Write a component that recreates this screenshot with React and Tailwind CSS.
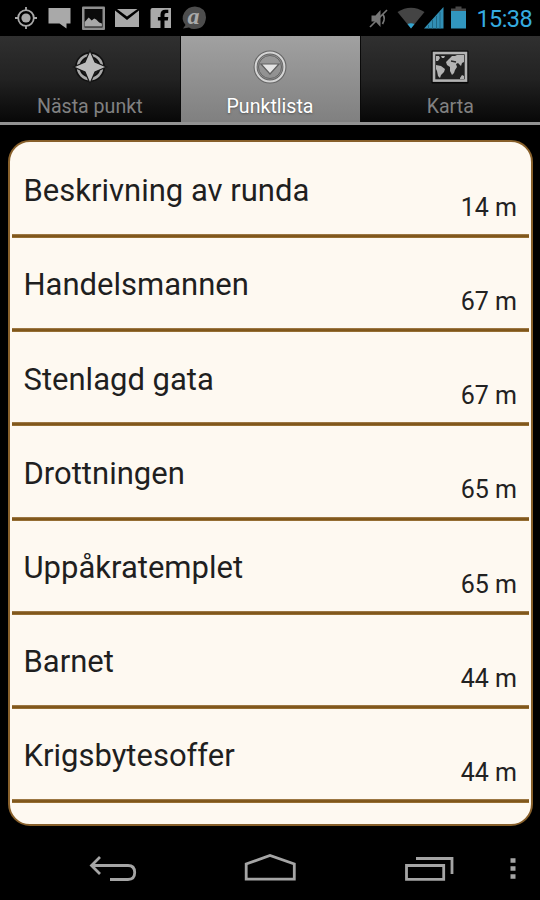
import React from "react";

const points = [
  { name: "Beskrivning av runda", distance: "14 m" },
  { name: "Handelsmannen", distance: "67 m" },
  { name: "Stenlagd gata", distance: "67 m" },
  { name: "Drottningen", distance: "65 m" },
  { name: "Uppåkratemplet", distance: "65 m" },
  { name: "Barnet", distance: "44 m" },
  { name: "Krigsbytesoffer", distance: "44 m" },
];

function StatusBar() {
  return (
    <header className="flex h-9 shrink-0 items-center justify-between bg-black pr-2">
      <svg width="220" height="36" viewBox="0 0 220 36" fill="#a9a9a9">
        <g stroke="#a9a9a9" strokeWidth="1.8">
          <circle cx="26" cy="18" r="7.800" fill="none" />
          <path d="M26 7v4M26 25v4M15 18h4M33 18h4" />
        </g>
        <circle cx="26" cy="18" r="4.6" />
        <path d="M48.500 8H70.500V23.500H66.500V28.500L59.500 23.500H48.500z" />
        <rect x="82" y="6.500" width="23" height="23.500" rx="1" fill="#8f8f8f" />
        <rect x="84.500" y="9" width="18" height="18.500" fill="#0b0b0b" />
        <path d="M84.700 26.500V22l4-4.500 3 3 2.500-2 2 1 3 3 2.700 1v3z" />
        <path d="M115 10.500L127 20l12-9.500V27H115z" />
        <path d="M117 9h20.500L127 16.500z" />
        <path d="M152.500 8H171V28H164.500V20.500h3.300l.5-3.500h-3.800v-2.300q0-1.700 1.800-1.700h2V9.800h-3q-4.800 0-4.800 4.800V17h-2.600v3.500h2.600V28H150.500V10q0-2 2-2z" />
        <path d="M183 28.500l2.500-3.500q-5-6-1.300-12.300Q188 6.500 195 6.500q11 1 11 11Q205 29 194 29q-3 0-5-1.500z" fill="#4d4d4d" />
        <text x="187.500" y="23.500" fontFamily="Liberation Serif, serif" fontWeight="bold" fontStyle="italic" fontSize="24" fill="#aaa">a</text>
      </svg>
      <div className="flex items-center">
        <svg width="106" height="36" viewBox="366 0 106 36">
          <path d="M371.500 15.500h4l5-5.500v17l-5-5.500h-4z" fill="#777" />
          <path d="M382.500 14q3.500 4 0 10M370 27L387 10" fill="none" stroke="#777" strokeWidth="1.700" />
          <path d="M397.500 12Q411 3.500 424.500 12L411 28.500z" fill="#444" />
          <path d="M407.500 24q3.500-1.500 7 0L411 28.500z" fill="#34a4cf" />
          <path d="M424 28.500L443.500 7v21.500z" fill="#318fb5" />
          <path d="M428.500 25v3.500M432.500 20v8.500M436.500 16v12.500M440 12v16.500" stroke="#206985" strokeWidth="1" />
          <path d="M451 11v-2.500h4.500V6.500h6V8.500h4.500V11z" fill="#484848" />
          <rect x="451" y="11" width="15" height="17.500" fill="#3196bf" />
        </svg>
        <span className="w-[60px] whitespace-nowrap pt-[2px] text-right text-[23.500px] leading-9 tracking-[-0.6px] text-[#35ace0]">15:38</span>
      </div>
    </header>
  );
}

function CompassIcon() {
  return (
    <svg width="36" height="36" viewBox="0 0 36 36">
      <circle cx="18" cy="18" r="12" fill="none" stroke="#101010" strokeWidth="6" />
      <circle cx="18" cy="18" r="12" fill="none" stroke="#a8a8a8" strokeWidth="2.600" />
      <path d="M18 1.500l5 11.500L34.500 18 23 23 18 34.500 13 23 1.500 18 13 13z" fill="#bcbcbc" stroke="#171717" strokeWidth="1.200" />
    </svg>
  );
}

function DropIcon() {
  return (
    <svg width="36" height="36" viewBox="0 0 36 36">
      <circle cx="18" cy="18" r="14.500" fill="none" stroke="#666" strokeWidth="4" />
      <circle cx="18" cy="18" r="14.400" fill="none" stroke="#d5d5d5" strokeWidth="2" />
      <circle cx="18" cy="18" r="11.500" fill="none" stroke="#656565" strokeWidth="1" />
      <path d="M9 15h18L18 25z" fill="#e5e5e5" stroke="#606060" strokeWidth="1.200" />
    </svg>
  );
}

function WorldIcon() {
  return (
    <svg width="38" height="36" viewBox="0 0 38 36">
      <rect x="0.500" y="1.500" width="37" height="33" rx="1" fill="#080808" />
      <rect x="3" y="4" width="32" height="27.600" fill="#202020" stroke="#b3b3b3" strokeWidth="2.600" />
      <g fill="#b3b3b3">
        <path d="M5 7h3l1 2-2 3H5zM10 7h4l-1 2h-2zM5 16l5 1 4 3-1 3-3 3-1 3-2-2-1-5-1-2z" />
        <path d="M18 10l3-3h3l2-1h7v7l-2 1-1 3-3-3-2 1 1 3-2 3-1 3-2 2-2-4v-4l-3-2-1-3zM29 29l2-3 2 1v3h-4z" />
      </g>
      <path d="M20 12l5 1" stroke="#292929" strokeWidth="1.300" fill="none" />
    </svg>
  );
}

function Tab({ label, icon, active }) {
  return (
    <button
      className={
        active
          ? "flex w-[179px] flex-col items-center bg-linear-to-b from-[#a1a1a1] to-[#808080] pt-[13px] text-white [text-shadow:0_1px_2px_#555]"
          : "flex min-w-0 flex-1 flex-col items-center bg-linear-to-b from-[#303030] via-[#222] to-[#080808] pt-[13px] text-[#818181]"
      }
    >
      {icon}
      <span className="mt-[10px] whitespace-nowrap text-[19.600px] leading-6">{label}</span>
    </button>
  );
}

function PointRow({ point }) {
  return (
    <li className="h-[94.17px] shrink-0">
      <div className="flex h-[90.17px] justify-between pl-[11.500px] pr-3">
        <span className="pt-[29.300px] text-[31px] leading-9 text-[#1f1f1f]">{point.name}</span>
        <span className="pt-[49px] text-[25px] leading-[30px] text-[#222]">{point.distance}</span>
      </div>
      <div className="h-1 bg-linear-to-b from-[#a98653] via-[#754b08] to-[#a07a40]" />
    </li>
  );
}

function NavigationBar() {
  return (
    <footer className="h-[74px] shrink-0 bg-black">
      <svg width="540" height="74" viewBox="0 826 540 74" fill="none" stroke="#a5a5a5" strokeWidth="2.800">
        <path d="M100 857L91.500 865.500L100 874M92 865.500H128Q134.700 865.500 134.700 872.500Q134.700 879.500 128 879.500H110" />
        <path d="M246.200 879.200V864L270 855.500L294.300 864V879.200z" />
        <path d="M406.500 865.500H443.700V879.300H406.500zM416 858.500H452V874" />
        <path d="M510.500 860.500h5M510.500 868.500h5M510.500 876.500h5" strokeWidth="4.500" />
      </svg>
    </footer>
  );
}

export default function App() {
  return (
    <div className="flex h-[900px] w-[540px] flex-col overflow-hidden bg-black font-[Roboto,sans-serif]">
      <StatusBar />
      <nav className="flex h-[89px] shrink-0 gap-[1px] border-b-[3px] border-[#929292] bg-[#0a0a0a]">
        <Tab label="Nästa punkt" icon={<CompassIcon />} />
        <Tab label="Punktlista" icon={<DropIcon />} active />
        <Tab label="Karta" icon={<WorldIcon />} />
      </nav>
      <main className="flex min-h-0 flex-1 flex-col pl-2 pr-[7px] pt-[15px]">
        <ul className="flex min-h-0 flex-1 flex-col overflow-hidden rounded-[22px] border-2 border-[#88602b] bg-[#fef9f1] px-[2px] pt-[2px]">
          {points.map((point) => (
            <PointRow key={point.name} point={point} />
          ))}
        </ul>
      </main>
      <NavigationBar />
    </div>
  );
}
